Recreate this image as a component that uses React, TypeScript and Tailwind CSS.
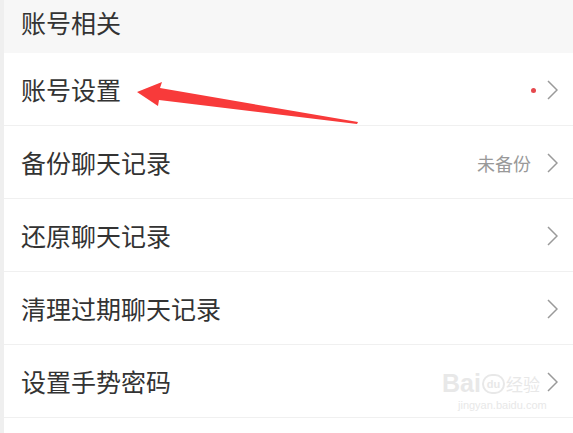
const rows = [
  { label: "账号设置", dot: true },
  { label: "备份聊天记录", note: "未备份" },
  { label: "还原聊天记录" },
  { label: "清理过期聊天记录" },
  { label: "设置手势密码" },
]

function Chevron() {
  return (
    <svg width="11" height="20" viewBox="0 0 11 20" className="shrink-0">
      <polyline points="1,1 10,10 1,19" fill="none" stroke="#9a9a9a" strokeWidth="1.5" />
    </svg>
  )
}

export default function App() {
  return (
    <div
      className="relative w-[573px] h-[433px] overflow-hidden bg-[#efefef] pl-[4px]"
      style={{ fontFamily: '"Noto Sans CJK SC", "Noto Sans", sans-serif' }}
    >
      <div className="h-[53px] bg-[#f7f7f7] pl-[17px] pt-[5px] text-[25px] leading-[34px] text-[#333]">
        账号相关
      </div>
      <div className="bg-white">
        {rows.map((r, i) => (
          <div
            key={i}
            className="flex h-[73px] items-center border-b border-[#f0f0f0] pl-[17px] pr-[15px] pt-[2px]"
          >
            <span className="flex-1 text-[25px] text-[#333]">{r.label}</span>
            {r.dot && <span className="mr-[11px] h-[5px] w-[5px] rounded-full bg-[#e5484d]" />}
            {r.note && <span className="mr-[16px] text-[18px] text-[#999]">{r.note}</span>}
            <Chevron />
          </div>
        ))}
        <div className="h-[20px]" />
      </div>

      <svg className="absolute left-0 top-0" width="573" height="433">
        <polygon
          points="137,92 162,82 160,88 358,122 357,124 159,100 158,106"
          fill="#f83a3a"
        />
      </svg>

      <div className="absolute left-[442px] top-[368px] text-[#e8e8e8]">
        <div className="flex items-end">
          <span className="text-[25px] font-bold leading-[30px]" style={{ fontFamily: '"Liberation Sans", sans-serif' }}>
            Bai
          </span>
          <span className="mx-[1px] mb-[4px] flex h-[20px] w-[23px] items-center justify-center rounded-full border-2 border-[#e8e8e8] text-[11px] font-bold leading-none" style={{ fontFamily: '"Liberation Sans", sans-serif' }}>
            du
          </span>
          <span className="text-[17px] leading-[28px]">经验</span>
        </div>
        <div className="pl-[16px] text-[11px] leading-[14px]" style={{ fontFamily: '"Liberation Sans", sans-serif' }}>
          jingyan.baidu.com
        </div>
      </div>
    </div>
  )
}
